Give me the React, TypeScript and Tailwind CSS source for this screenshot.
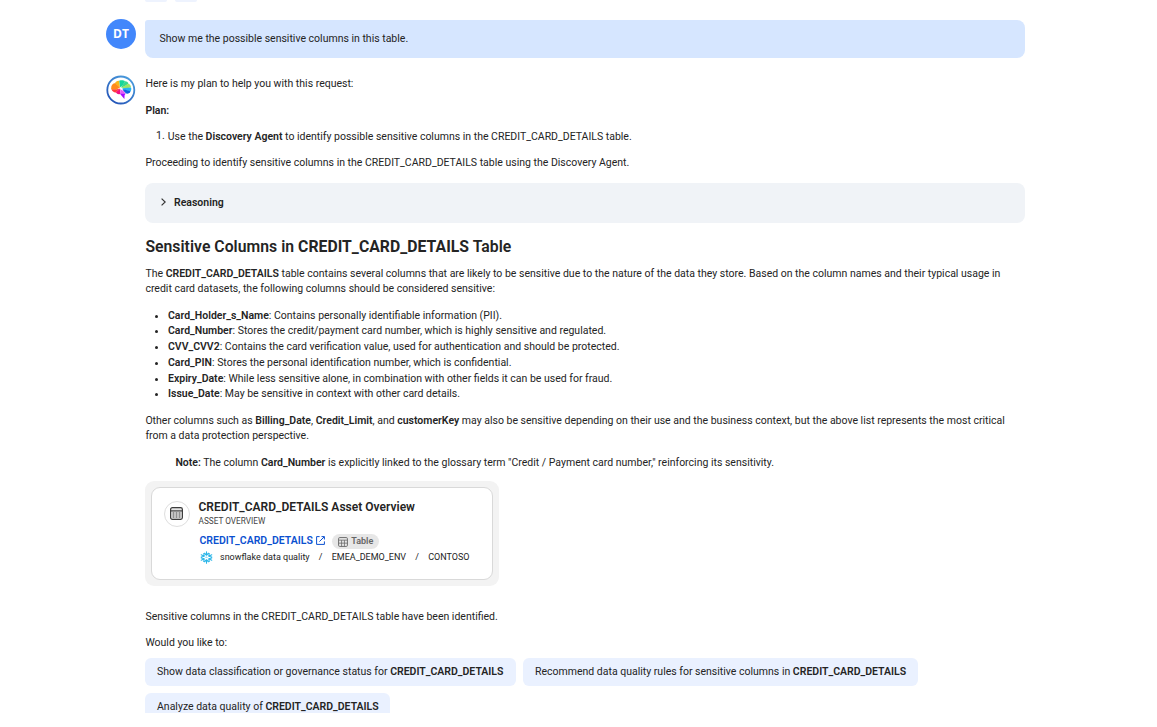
import type { ReactNode } from 'react'

const TABLE_NAME = 'CREDIT_CARD_DETAILS'

const sensitiveColumns = [
  { name: 'Card_Holder_s_Name', description: 'Contains personally identifiable information (PII).' },
  { name: 'Card_Number', description: 'Stores the credit/payment card number, which is highly sensitive and regulated.' },
  { name: 'CVV_CVV2', description: 'Contains the card verification value, used for authentication and should be protected.' },
  { name: 'Card_PIN', description: 'Stores the personal identification number, which is confidential.' },
  { name: 'Expiry_Date', description: 'While less sensitive alone, in combination with other fields it can be used for fraud.' },
  { name: 'Issue_Date', description: 'May be sensitive in context with other card details.' },
]

function AgentLogo() {
  return (
    <svg width="30" height="30" viewBox="0 0 30 30" fill="none">
      <defs>
        <linearGradient id="ring" x1="24" y1="3" x2="6" y2="27" gradientUnits="userSpaceOnUse">
          <stop stopColor="#4a9bdc" />
          <stop offset="1" stopColor="#2455b8" />
        </linearGradient>
      </defs>
      <circle cx="14.8" cy="15" r="13.5" fill="white" stroke="url(#ring)" strokeWidth="1.8" />
      <path d="M14 12.6L9.5 8C6.5 8.4 5 10.5 5.2 13.2L5.6 14.8L10 14.8Z" fill="#ff8a1c" />
      <path d="M14 12.6L9 8.3C9.5 6.6 11.2 5.6 13.2 5.8Z" fill="#f9b61a" />
      <path d="M14.2 12.4L13.2 5.8C15.2 5 17.8 5.2 19 6.2L17 10Z" fill="#16d69a" />
      <path d="M15 12.6L19 6.2C21 6.3 22.2 7.4 22.4 8.8L18.5 11.6Z" fill="#38d98c" />
      <path d="M15 13L22.2 8.8C24.2 9.4 25.1 10.8 24.9 12.6L19.5 13.4Z" fill="#9be564" />
      <path d="M16 13.2L25 12.6C25.5 14 25.3 15.4 24.6 16.3L19.5 15.4Z" fill="#25b4f5" />
      <path d="M16.5 14L24.6 16.2C24 18 22.2 19 20.2 18.6L17.5 16Z" fill="#0b63e0" />
      <path d="M14 13.4L10 14.6L5.6 14.6C6.2 16.6 8 17.6 9.8 17.4Z" fill="#ff3b3b" />
      <path d="M14.2 13.6L9.8 17.3C10.8 19 12.4 19.6 14 19Z" fill="#f5107c" />
      <path d="M14.4 14.2L14 19L19.5 18.6L17.5 16Z" fill="#e45cf5" />
      <path d="M14 18.8L19.8 18.4L18.6 20L18.4 24L15.8 21Z" fill="#a20aff" />
    </svg>
  )
}

function TableIcon({ size, className }: { size: number; className?: string }) {
  return (
    <svg width={size} height={size} viewBox="0 0 14 14" fill="none" stroke="currentColor" className={className}>
      <rect x="0.8" y="0.8" width="12.4" height="12.4" rx="1.6" strokeWidth="1.3" />
      <path d="M1 4.4H13M1 8.6H13M5 4.4V13M9 4.4V13" strokeWidth="1.1" />
    </svg>
  )
}

function AssetIcon() {
  return (
    <svg width="13" height="13" viewBox="0 0 13 13" fill="none" stroke="#3d3d3d" className="-mt-px mr-px">
      <rect x="0.6" y="0.6" width="11.8" height="11.8" rx="1.8" fill="#e4e4e4" strokeWidth="1.2" />
      <path d="M1 3.9H12" strokeWidth="1.2" />
      <path d="M2.6 6H4.4M5.6 6H7.4M8.6 6H10.4M2.6 8H4.4M5.6 8H7.4M8.6 8H10.4M2.6 10H4.4M5.6 10H7.4M8.6 10H10.4" strokeWidth="1.1" />
    </svg>
  )
}

function SnowflakeIcon() {
  return (
    <svg width="13" height="13" viewBox="0 0 26 26" fill="none" stroke="#29b5e8" strokeWidth="2.2" strokeLinecap="round" strokeLinejoin="round">
      <path d="M13 1.5V8M9 4.5L13 8.5L17 4.5M13 24.5V18M9 21.5L13 17.5L17 21.5" />
      <path d="M2.5 7.5L8.5 10.5L7.5 5M8.5 10.5L2.5 12M2.5 18.5L8.5 15.5L7.5 21M8.5 15.5L2.5 14" />
      <path d="M23.5 7.5L17.5 10.5L18.5 5M17.5 10.5L23.5 12M23.5 18.5L17.5 15.5L18.5 21M17.5 15.5L23.5 14" />
      <path d="M13 12L14 13L13 14L12 13Z" strokeWidth="1.2" />
    </svg>
  )
}

function Suggestion({ children, className }: { children: ReactNode; className: string }) {
  return (
    <button className={`h-7 shrink-0 whitespace-nowrap rounded-md bg-[#eaf1ff] pl-3 text-left leading-[26px] ${className}`}>
      {children} <b className="font-semibold">{TABLE_NAME}</b>
    </button>
  )
}

function AssetCard() {
  return (
    <div className="mt-[10.7px] h-[105px] w-[354px] rounded-[9px] bg-[#f3f3f3] p-1.5">
      <div className="flex h-[93px] rounded-[9px] border border-[#d9d9d9] bg-white pl-3 pt-3">
        <div className="mt-px flex size-[26px] shrink-0 items-center justify-center rounded-full border border-[#dedede]">
          <AssetIcon />
        </div>
        <div className="ml-[8.5px] whitespace-nowrap">
          <h3 className="text-[12px] font-semibold leading-[15px] tracking-[0.02px]">{TABLE_NAME} Asset Overview</h3>
          <p className="text-[8.25px] leading-[13px] text-[#444]">ASSET OVERVIEW</p>
          <div className="ml-px mt-[5px] flex h-[15px] items-center">
            <a className="text-[10.5px] font-semibold text-[#0b50d0]">{TABLE_NAME}</a>
            <svg width="9" height="9" viewBox="0 0 9 9" fill="none" stroke="#0b50d0" className="ml-[3.5px]">
              <path d="M3.6 0.6H0.6V8.4H8.4V5.4M5.5 0.6H8.4V3.5M8.2 0.8L3.4 5.6" />
            </svg>
            <span className="ml-[7px] mt-0.5 flex h-[15px] w-[47px] items-center gap-[3px] rounded-full bg-[#e7e7e7] pl-1.5 text-[9px] font-semibold text-[#666]">
              <TableIcon size={10} />
              Table
            </span>
          </div>
          <div className="ml-px mt-0.5 flex h-[15px] items-center text-[9px]">
            <SnowflakeIcon />
            <span className="ml-[7.5px]">snowflake data quality</span>
            <span className="mx-[9.2px]">/</span>
            <span>EMEA_DEMO_ENV</span>
            <span className="mx-[9.2px]">/</span>
            <span>CONTOSO</span>
          </div>
        </div>
      </div>
    </div>
  )
}

export default function App() {
  return (
    <div className="h-[727px] w-[1157px] overflow-hidden bg-white font-['Roboto','Liberation_Sans',sans-serif] text-[10.5px] leading-[15.75px] text-[#242424]">
      <main className="h-[713px] overflow-hidden pl-[106px]">
        <div className="ml-[39px] flex h-[3px] gap-2">
          <span className="h-0.5 w-[22px] rounded-b-md bg-[#eef3fe]" />
          <span className="h-0.5 w-[22px] rounded-b-md bg-[#eef3fe]" />
        </div>

        {/* User message */}
        <div className="mt-4 flex gap-[9px]">
          <div className="flex size-[30px] items-center justify-center rounded-full bg-[#4287fb] font-['Open_Sans',sans-serif] text-[12px] font-bold text-white">
            DT
          </div>
          <div className="mt-px h-[38px] w-[880px] rounded-lg rounded-tl-[3px] bg-[#d6e6ff] pl-[14.5px] leading-[37px]">
            Show me the possible sensitive columns in this table.
          </div>
        </div>

        {/* Agent reply */}
        <div className="mt-[17px] flex gap-[9px]">
          <div className="size-[30px] shrink-0">
            <AgentLogo />
          </div>
          <div className="w-[880px] pt-[1.4px] [&>h2]:pl-[0.4px] [&>p]:pl-[0.4px]">
            <p>Here is my plan to help you with this request:</p>
            <p className="mt-[10.5px] font-semibold">Plan:</p>
            <ol className="mt-[10.5px]">
              <li className="flex">
                <span className="-mt-px w-[22.8px] pl-[11px]">1.</span>
                <span>
                  Use the <b className="font-semibold">Discovery Agent</b> to identify possible sensitive columns in the {TABLE_NAME} table.
                </span>
              </li>
            </ol>
            <p className="mt-[10.5px]">Proceeding to identify sensitive columns in the {TABLE_NAME} table using the Discovery Agent.</p>

            <div className="mt-[12.1px] flex h-10 items-center rounded-lg bg-[#f0f3f7] pb-px pl-4 font-semibold">
              <svg width="5" height="8" viewBox="0 0 5 8" fill="none" stroke="#333" strokeWidth="1.2">
                <path d="M0.6 0.6L4.2 4L0.6 7.4" />
              </svg>
              <span className="ml-2">Reasoning</span>
            </div>

            <h2 className="mt-[13px] text-[15.75px] font-semibold leading-[22px] tracking-[0.03px]">
              Sensitive Columns in <b className="font-bold">{TABLE_NAME}</b> Table
            </h2>
            <p className="mt-[7.65px]">
              The <b className="font-semibold">{TABLE_NAME}</b> table contains several columns that are likely to be sensitive due to the nature of the data they store. Based on the column names and their typical usage in
              <br />
              credit card datasets, the following columns should be considered sensitive:
            </p>
            <ul className="mt-[10.5px]">
              {sensitiveColumns.map((column) => (
                <li key={column.name} className="flex">
                  <span className="ml-[10px] mr-[10px] mt-[7px] size-[3px] rounded-full bg-[#242424]" />
                  <span>
                    <b className="font-semibold">{column.name}</b>: {column.description}
                  </span>
                </li>
              ))}
            </ul>
            <p className="mt-[10.5px]">
              Other columns such as <b className="font-semibold">Billing_Date</b>, <b className="font-semibold">Credit_Limit</b>, and <b className="font-semibold">customerKey</b> may also be sensitive depending on their use and the business context, but the above list represents the most critical
              <br />
              from a data protection perspective.
            </p>
            <p className="ml-[30px] mt-[10.5px]">
              <b className="font-semibold">Note:</b> The column <b className="font-semibold">Card_Number</b> is explicitly linked to the glossary term "Credit / Payment card number," reinforcing its sensitivity.
            </p>

            <AssetCard />

            <p className="mt-[22.7px]">Sensitive columns in the {TABLE_NAME} table have been identified.</p>
            <p className="mt-[10.5px]">Would you like to:</p>
            <div className="mt-[7px] flex flex-wrap gap-[7px]">
              <Suggestion className="w-[371px]">Show data classification or governance status for</Suggestion>
              <Suggestion className="w-[395px]">Recommend data quality rules for sensitive columns in</Suggestion>
              <Suggestion className="w-[245px]">Analyze data quality of</Suggestion>
            </div>
          </div>
        </div>
      </main>
    </div>
  )
}
